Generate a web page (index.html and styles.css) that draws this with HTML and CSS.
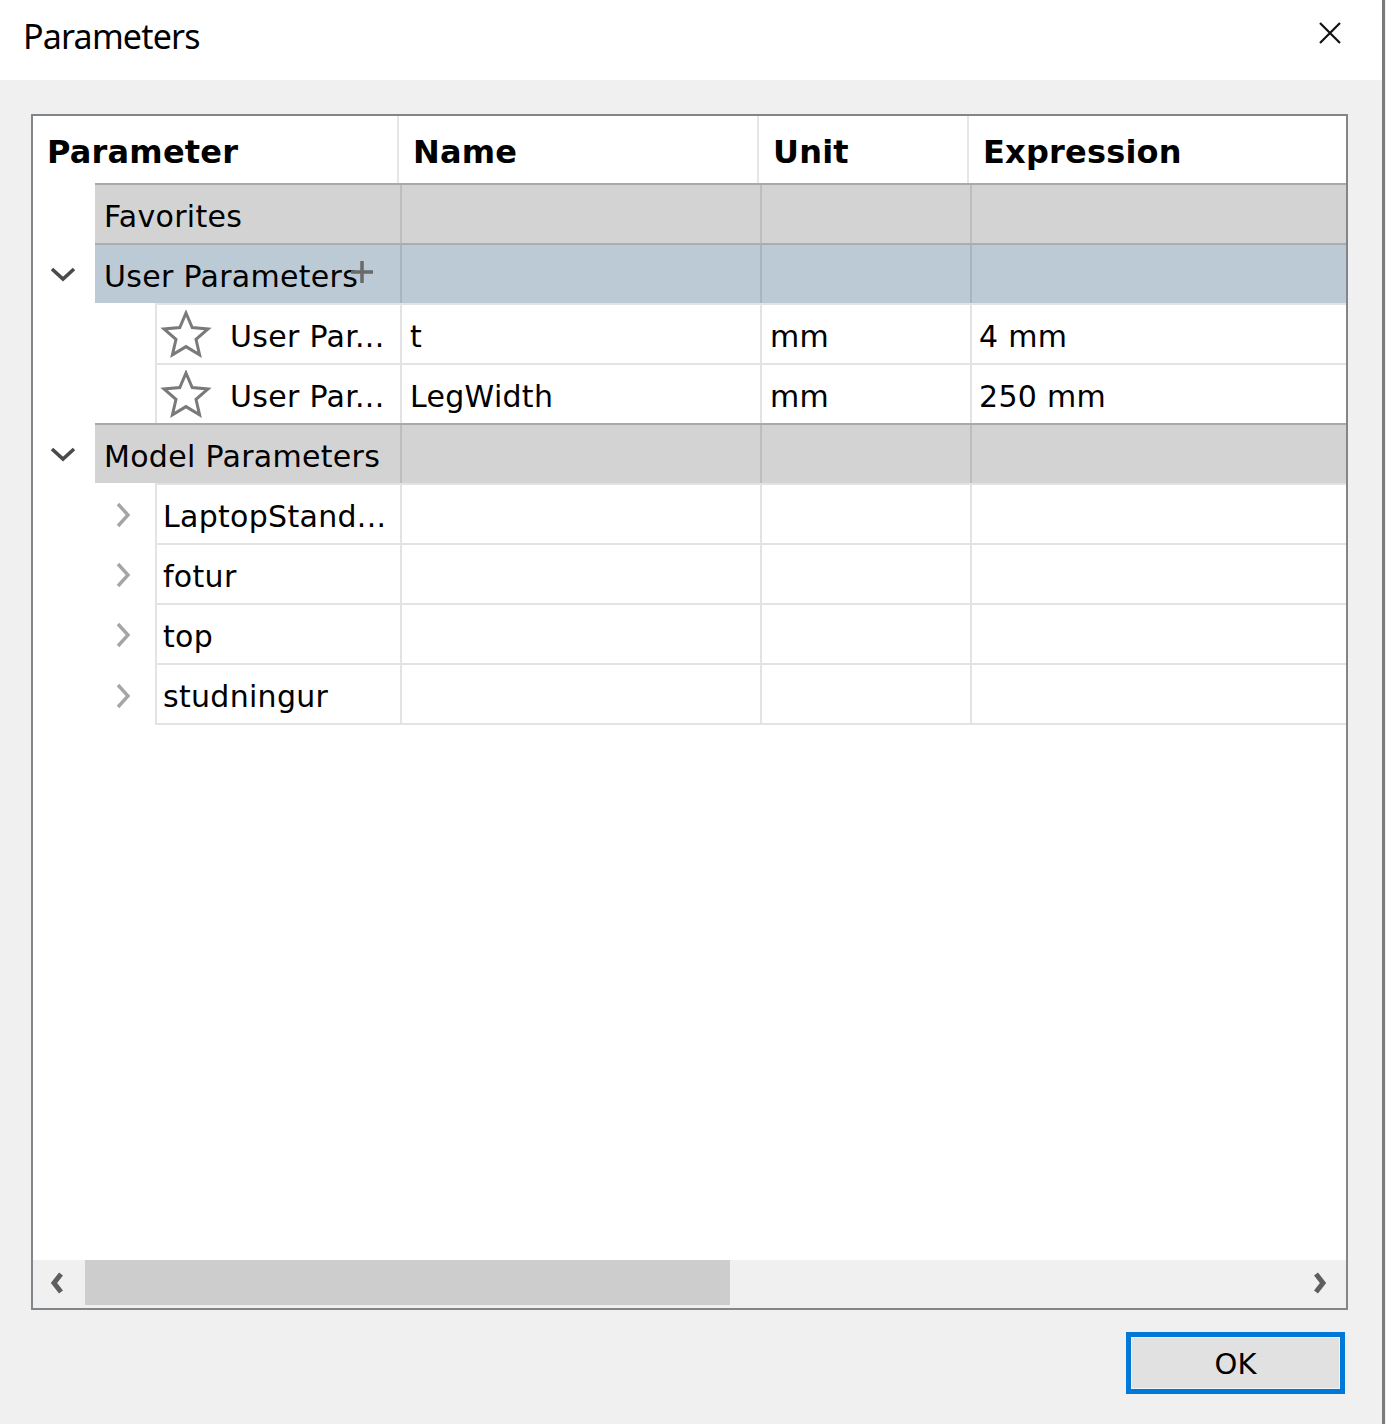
FILE: index.html
```html
<!DOCTYPE html>
<html>
<head>
<meta charset="utf-8">
<title>Parameters</title>
<link rel="stylesheet" href="styles.css">
</head>
<body>
<div class="window">
  <div class="titlebar">
    <div class="title">Parameters</div>
    <svg class="close" width="22" height="22" viewBox="0 0 22 22"><path d="M1 1L21 21M21 1L1 21" stroke="#111" stroke-width="2.2" fill="none"/></svg>
  </div>
  <div class="content">
    <div class="table">
      <div class="thead">
        <div class="th h1">Parameter</div>
        <div class="th h2">Name</div>
        <div class="th h3">Unit</div>
        <div class="th h4">Expression</div>
      </div>
      <div class="tbody">
        <div class="row">
          <div class="gutter g-group"></div>
          <div class="cells group grey">
            <div class="cell c1 gc1">Favorites</div><div class="cell c2"></div><div class="cell c3"></div><div class="cell c4"></div>
          </div>
        </div>
        <div class="row">
          <div class="gutter g-group">
            <svg class="down" width="28" height="18" viewBox="0 0 28 18"><path d="M3 4L14 14L25 4" stroke="#4a4a4a" stroke-width="3.6" fill="none"/></svg>
          </div>
          <div class="cells group blue">
            <div class="cell c1 gc1">User Parameters<svg class="plus" width="24" height="24" viewBox="0 0 24 24"><path d="M12 1V23M1 12H23" stroke="#6a6a6a" stroke-width="3.5" fill="none"/></svg></div><div class="cell c2"></div><div class="cell c3"></div><div class="cell c4"></div>
          </div>
        </div>
        <div class="row">
          <div class="gutter g-child"></div>
          <div class="cells child">
            <div class="cell c1 cc1"><svg class="star" width="52" height="48" viewBox="0 0 52 48"><path d="M26 3L32.2 17.6L48 18.9L36 29.3L39.6 44.8L26 36.6L12.4 44.8L16 29.3L4 18.9L19.8 17.6Z" stroke="#7a7a7a" stroke-width="3" fill="none" stroke-linejoin="miter"/></svg><span class="lbl">User Par...</span></div><div class="cell c2">t</div><div class="cell c3">mm</div><div class="cell c4">4 mm</div>
          </div>
        </div>
        <div class="row">
          <div class="gutter g-child"></div>
          <div class="cells child">
            <div class="cell c1 cc1"><svg class="star" width="52" height="48" viewBox="0 0 52 48"><path d="M26 3L32.2 17.6L48 18.9L36 29.3L39.6 44.8L26 36.6L12.4 44.8L16 29.3L4 18.9L19.8 17.6Z" stroke="#7a7a7a" stroke-width="3" fill="none" stroke-linejoin="miter"/></svg><span class="lbl">User Par...</span></div><div class="cell c2">LegWidth</div><div class="cell c3">mm</div><div class="cell c4">250 mm</div>
          </div>
        </div>
        <div class="row">
          <div class="gutter g-group">
            <svg class="down" width="28" height="18" viewBox="0 0 28 18"><path d="M3 4L14 14L25 4" stroke="#4a4a4a" stroke-width="3.6" fill="none"/></svg>
          </div>
          <div class="cells group grey">
            <div class="cell c1 gc1">Model Parameters</div><div class="cell c2"></div><div class="cell c3"></div><div class="cell c4"></div>
          </div>
        </div>
        <div class="row">
          <div class="gutter g-child"><svg class="right" width="18" height="28" viewBox="0 0 18 28"><path d="M4 3L14 14L4 25" stroke="#a5a5a5" stroke-width="3.4" fill="none"/></svg></div>
          <div class="cells child">
            <div class="cell c1 mc1">LaptopStand...</div><div class="cell c2"></div><div class="cell c3"></div><div class="cell c4"></div>
          </div>
        </div>
        <div class="row">
          <div class="gutter g-child"><svg class="right" width="18" height="28" viewBox="0 0 18 28"><path d="M4 3L14 14L4 25" stroke="#a5a5a5" stroke-width="3.4" fill="none"/></svg></div>
          <div class="cells child">
            <div class="cell c1 mc1">fotur</div><div class="cell c2"></div><div class="cell c3"></div><div class="cell c4"></div>
          </div>
        </div>
        <div class="row">
          <div class="gutter g-child"><svg class="right" width="18" height="28" viewBox="0 0 18 28"><path d="M4 3L14 14L4 25" stroke="#a5a5a5" stroke-width="3.4" fill="none"/></svg></div>
          <div class="cells child">
            <div class="cell c1 mc1">top</div><div class="cell c2"></div><div class="cell c3"></div><div class="cell c4"></div>
          </div>
        </div>
        <div class="row last">
          <div class="gutter g-child"><svg class="right" width="18" height="28" viewBox="0 0 18 28"><path d="M4 3L14 14L4 25" stroke="#a5a5a5" stroke-width="3.4" fill="none"/></svg></div>
          <div class="cells child">
            <div class="cell c1 mc1">studningur</div><div class="cell c2"></div><div class="cell c3"></div><div class="cell c4"></div>
          </div>
        </div>
      </div>
      <div class="hscroll">
        <div class="arrow-box left-box"><svg width="20" height="26" viewBox="0 0 20 26"><path d="M14 4L7 13L14 22" stroke="#5e5e5e" stroke-width="5" fill="none"/></svg></div>
        <div class="thumb"></div>
        <div class="track"></div>
        <div class="arrow-box right-box"><svg width="20" height="26" viewBox="0 0 20 26"><path d="M6 4L13 13L6 22" stroke="#5e5e5e" stroke-width="5" fill="none"/></svg></div>
      </div>
    </div>
  </div>
  <div class="footer">
    <div class="ok">OK</div>
  </div>
</div>
</body>
</html>
```

FILE: styles.css
```css
html, body {
  margin: 0;
  padding: 0;
}
body {
  background: #f0f0f0;
  width: 1386px;
  height: 1424px;
  overflow: hidden;
  font-family: "DejaVu Sans", Verdana, sans-serif;
  color: #000;
}
.window {
  width: 1382px;
  height: 1424px;
  border-right: 3px solid #7b7b7b;
  background: #f0f0f0;
  display: flex;
  flex-direction: column;
}
.titlebar {
  height: 80px;
  background: #fff;
  display: flex;
  align-items: center;
  justify-content: space-between;
  padding: 0 41px 0 23px;
  box-sizing: border-box;
  flex: none;
}
.title {
  font-family: "Noto Sans", "Open Sans", sans-serif;
  font-size: 34px;
  letter-spacing: -0.8px;
  padding-bottom: 8px;
}
.close {
  margin-bottom: 14px;
  display: block;
}
.content {
  padding: 34px 0 0 31px;
  flex: none;
}
.table {
  width: 1317px;
  height: 1196px;
  box-sizing: border-box;
  border: 2px solid #82868b;
  background: #fff;
  display: flex;
  flex-direction: column;
}
.thead {
  display: flex;
  height: 67px;
  flex: none;
}
.th {
  box-sizing: border-box;
  font-weight: bold;
  font-size: 32px;
  letter-spacing: 0.2px;
  padding-left: 14px;
  padding-top: 4px;
  display: flex;
  align-items: center;
  border-right: 2px solid #e6e6e6;
}
.h1 { width: 366px; }
.h2 { width: 360px; }
.h3 { width: 210px; }
.h4 { flex: 1; border-right: none; }
.tbody {
  flex: 1;
  display: flex;
  flex-direction: column;
}
.row {
  display: flex;
  height: 60px;
  flex: none;
}
.gutter {
  flex: none;
  display: flex;
  align-items: center;
  box-sizing: border-box;
}
.g-group {
  width: 62px;
  padding-left: 16px;
  padding-top: 2px;
}
.g-child {
  width: 122px;
  padding-left: 81px;
  padding-top: 3px;
}
.down, .right { display: block; }
.cells {
  flex: 1;
  display: flex;
  box-sizing: border-box;
}
.group.grey {
  background: #d3d3d3;
  border-top: 2px solid #a9a9a9;
}
.group.blue {
  background: #bccad5;
  border-top: 2px solid #a6aeb4;
}
.child {
  border-top: 2px solid #e3e3e3;
  border-left: 2px solid #e3e3e3;
}
.row.last .child {
  border-bottom: 2px solid #e3e3e3;
}
.row.last { height: 62px; }
.cell {
  box-sizing: border-box;
  font-size: 30px;
  letter-spacing: 0.3px;
  display: flex;
  align-items: center;
  padding-top: 5px;
  white-space: nowrap;
  border-right: 2px solid #e3e3e3;
}
.group.grey .cell { border-right-color: #bdbdbd; }
.group.blue .cell { border-right-color: #a9b4bd; }
.cell.c4 { border-right: none; }
.gc1 { width: 307px; padding-left: 9px; }
.cc1 { width: 245px; padding-left: 3px; padding-top: 0; }
.mc1 { width: 245px; padding-left: 6px; }
.c2 { width: 360px; padding-left: 8px; }
.c3 { width: 210px; padding-left: 8px; }
.c4 { flex: 1; padding-left: 7px; }
.plus {
  margin-left: -8px;
  margin-top: -10px;
  display: block;
}
.star {
  display: block;
  flex: none;
}
.lbl {
  margin-left: 18px;
  padding-top: 5px;
}
.hscroll {
  height: 48px;
  flex: none;
  background: #f0f0f0;
  display: flex;
  align-items: flex-start;
}
.arrow-box {
  height: 45px;
  display: flex;
  align-items: center;
  box-sizing: border-box;
}
.left-box {
  width: 52px;
  padding-left: 14px;
}
.right-box {
  width: 50px;
  padding-left: 14px;
}
.thumb {
  width: 645px;
  height: 45px;
  background: #cdcdcd;
}
.track { flex: 1; }
.footer {
  display: flex;
  justify-content: flex-end;
  padding: 22px 37px 0 0;
}
.ok {
  width: 219px;
  height: 62px;
  box-sizing: border-box;
  border: 5px solid #0078d7;
  background: #e1e1e1;
  box-shadow: inset 0 0 0 1px #f3f3f3;
  display: flex;
  align-items: center;
  justify-content: center;
  font-size: 29px;
  padding-top: 2px;
}
```
